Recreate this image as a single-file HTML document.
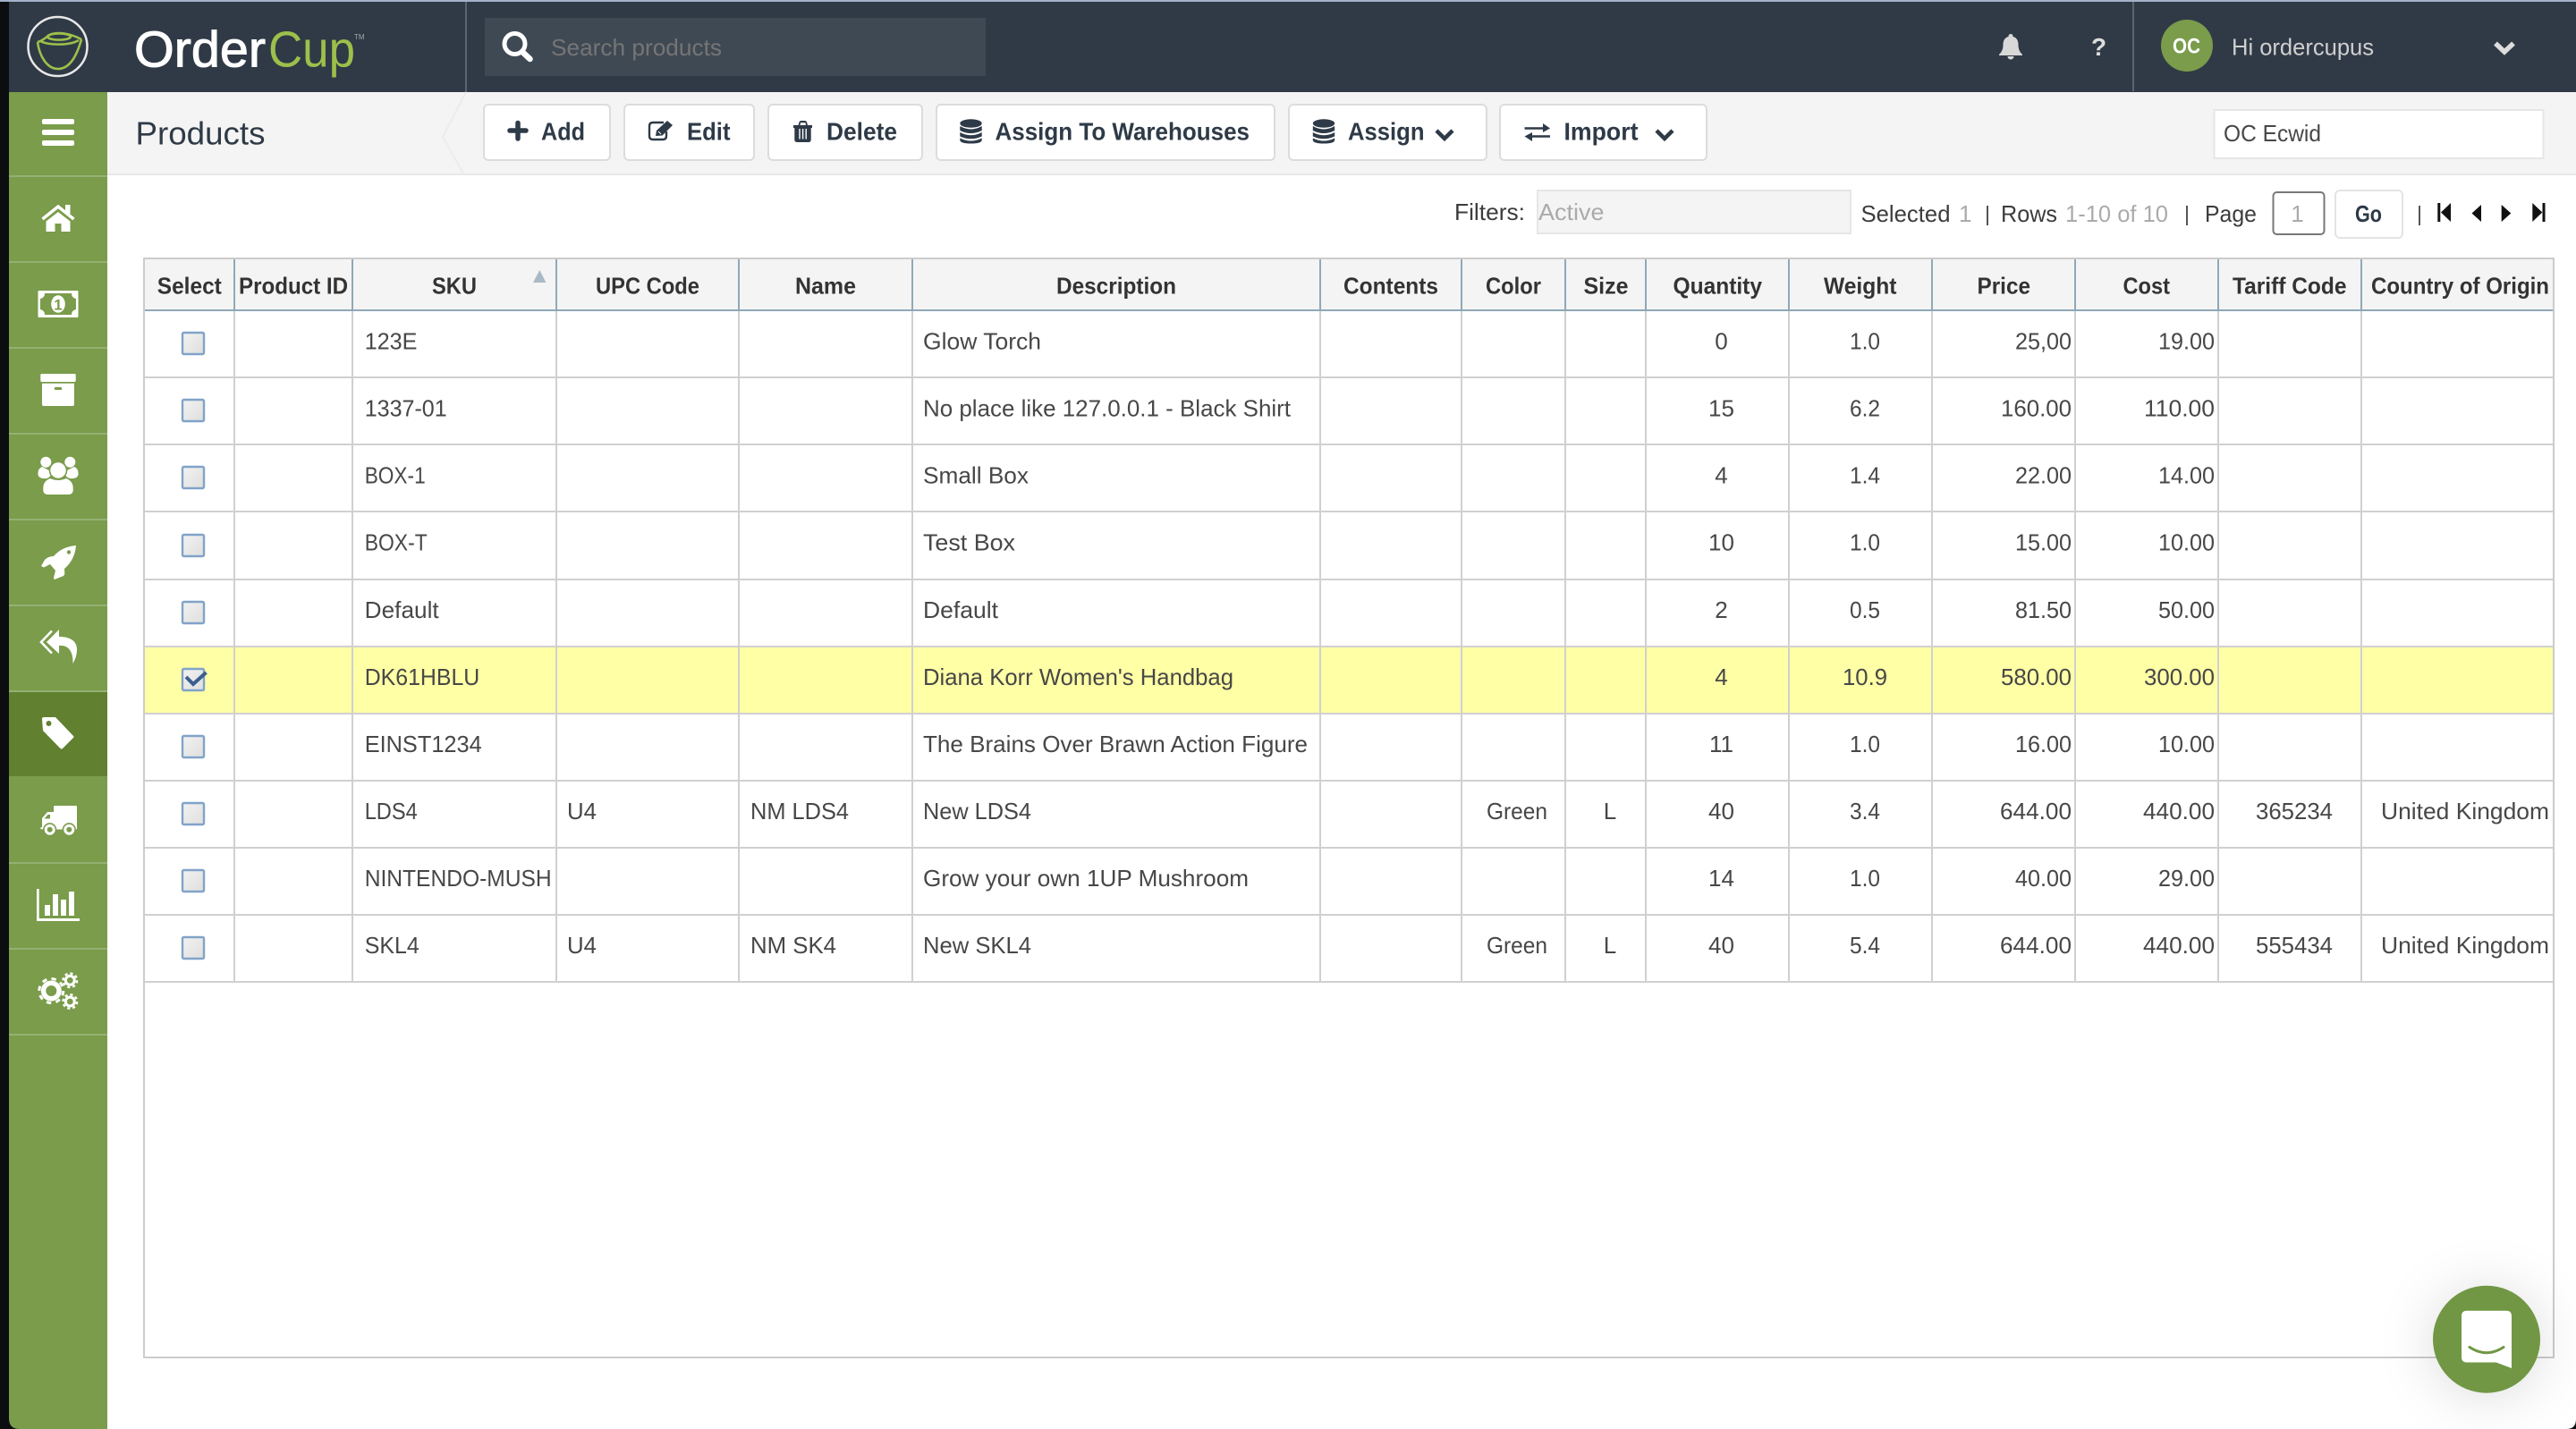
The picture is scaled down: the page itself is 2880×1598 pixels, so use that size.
<!DOCTYPE html>
<html><head><meta charset="utf-8"><title>Products</title>
<style>
html,body{margin:0;padding:0;background:#fff;width:2880px;height:1598px;overflow:hidden}
svg{display:block;font-family:"Liberation Sans",Arial,sans-serif}
.t{font-size:26px;fill:#474747}
.h{font-size:26px;font-weight:bold;fill:#333}
.btn{font-size:28px;font-weight:bold;fill:#2e3a47}
.g{fill:#aaa}
.d{fill:#444}
.m{text-anchor:middle}
.e{text-anchor:end}
</style></head><body>
<svg width="2880" height="1598" viewBox="0 0 2880 1598" xmlns="http://www.w3.org/2000/svg">
<rect width="2880" height="1598" fill="#fff"/>
<!-- left black strip -->
<rect width="10" height="1598" fill="#0b0d0e"/>
<!-- header -->
<rect x="10" y="0" width="2870" height="103" fill="#303a46"/>
<rect x="0" y="0" width="2880" height="2" fill="#a4b2c9"/>
<rect x="520" y="2" width="2" height="101" fill="#5a6570"/>
<rect x="2384" y="2" width="2" height="100" fill="#5a6570"/>
<!-- logo -->
<circle cx="64.5" cy="52" r="33" fill="none" stroke="#e8e8e8" stroke-width="2.5"/>
<g fill="none" stroke="#9cc04b" stroke-width="2.6">
<path d="M42 47 C44 62 52 77 65 77 C78 77 86 62 91 44"/>
<path d="M42 47 C50 45 52 40 58 38 C66 36 78 37 91 44"/>
<ellipse cx="66" cy="41" rx="13" ry="3.6"/>
<path d="M45 46 C55 51 78 51 88 45"/>
</g>
<text x="150" y="74.5" font-size="57" fill="#fff" stroke="#fff" stroke-width="1" textLength="147" lengthAdjust="spacingAndGlyphs">Order</text>
<text x="300" y="74.5" font-size="57" fill="#9cc04b" textLength="97" lengthAdjust="spacingAndGlyphs">Cup</text>
<text x="396" y="44" font-size="8" fill="#9aa">TM</text>
<!-- search -->
<rect x="542" y="20" width="560" height="65" fill="#3f4954"/>
<circle cx="575.5" cy="49" r="11.5" fill="none" stroke="#fff" stroke-width="5"/>
<path d="M584 58 L592.5 66" stroke="#fff" stroke-width="6.5" stroke-linecap="round"/>
<text x="616" y="62" class="t" style="fill:#757575" textLength="191" lengthAdjust="spacingAndGlyphs">Search products</text>
<!-- header right -->
<path fill="#d8d8d8" d="M2248 38 C2250 38 2250.5 39.5 2250.5 41 C2255 42 2256.5 46 2256.5 50 C2256.5 55 2258 58 2261 61 V62 H2235 V61 C2238 58 2239.5 55 2239.5 50 C2239.5 46 2241 42 2245.5 41 C2245.5 39.5 2246 38 2248 38Z M2244.5 63 H2251.5 A3.5 3.5 0 0 1 2244.5 63Z"/>
<text x="2346.5" y="62" font-size="28" font-weight="bold" fill="#ddd" class="m">?</text>
<circle cx="2445" cy="51" r="29" fill="#7a9c4b"/>
<text x="2444.5" y="59.3" font-size="24" font-weight="bold" fill="#fff" class="m" textLength="31" lengthAdjust="spacingAndGlyphs">OC</text>
<text x="2495" y="61.5" font-size="26" fill="#cfcfcf" textLength="159" lengthAdjust="spacingAndGlyphs">Hi ordercupus</text>
<path d="M2790 48.5 L2800 58 L2810 48.5" fill="none" stroke="#ddd" stroke-width="5.5"/>
<!-- toolbar -->
<rect x="120" y="103" width="2760" height="91" fill="#f4f4f4"/>
<rect x="120" y="194" width="2760" height="2" fill="#e8e8e8"/>
<polyline points="521,103 495,153 518,194" fill="none" stroke="#ececec" stroke-width="2"/>
<text x="151.5" y="161.5" font-size="36" fill="#2f3a46" textLength="145" lengthAdjust="spacingAndGlyphs">Products</text>
<g fill="#fff" stroke="#dcdcdc" stroke-width="2">
<rect x="541" y="117" width="141" height="62" rx="5"/>
<rect x="698" y="117" width="145" height="62" rx="5"/>
<rect x="859" y="117" width="172" height="62" rx="5"/>
<rect x="1047" y="117" width="378" height="62" rx="5"/>
<rect x="1441" y="117" width="221" height="62" rx="5"/>
<rect x="1677" y="117" width="231" height="62" rx="5"/>
</g>
<!-- plus -->
<path d="M579 137.5 V155 M570 146 H588" stroke="#2e3a47" stroke-width="5.5" stroke-linecap="round" fill="none"/>
<text x="605" y="156.5" class="btn" textLength="49" lengthAdjust="spacingAndGlyphs">Add</text>
<!-- edit -->
<path d="M742 137 H730 Q726 137 726 141 V152 Q726 156 730 156 H741 Q745 156 745 152 V147" fill="none" stroke="#2e3a47" stroke-width="2.4"/>
<path d="M733 152 L734 146 L746 135 L752 140 L740.5 151.5Z" fill="#2e3a47"/>
<path d="M736 147 L739 150" stroke="#fff" stroke-width="1"/>
<text x="768" y="156.5" class="btn" textLength="48.5" lengthAdjust="spacingAndGlyphs">Edit</text>
<!-- trash -->
<path fill="#2e3a47" d="M892.5 140 L893.5 136.5 Q894 135 896 135 H899.5 Q901.5 135 902 136.5 L903 140 H908 V143 H906.7 V156 Q906.7 159 904 159 H891 Q888.3 159 888.3 156 V143 H887 V140Z"/>
<path d="M895 137.3 H900.5 L901 140 H894.5Z" fill="#fff"/>
<path d="M894 144 V155.5 M897.6 144 V155.5 M901.2 144 V155.5" stroke="#fff" stroke-width="1.4"/>
<text x="924" y="156.5" class="btn" textLength="79" lengthAdjust="spacingAndGlyphs">Delete</text>
<!-- db -->
<g id="db" fill="#2e3a47">
<ellipse cx="1085.5" cy="138" rx="12.2" ry="4.8"/>
<path d="M1073.3 141 Q1085.5 148 1097.7 141 V146 Q1085.5 152 1073.3 146Z"/>
<path d="M1073.3 148 Q1085.5 154.5 1097.7 148 V152.5 Q1085.5 158 1073.3 152.5Z"/>
<path d="M1073.3 154.5 Q1085.5 160.5 1097.7 154.5 V156.5 Q1097.7 160.5 1085.5 160.5 Q1073.3 160.5 1073.3 156.5Z"/>
</g>
<text x="1112.5" y="156.5" class="btn" textLength="284.5" lengthAdjust="spacingAndGlyphs">Assign To Warehouses</text>
<g fill="#2e3a47" transform="translate(394.5 0)">
<ellipse cx="1085.5" cy="138" rx="12.2" ry="4.8"/>
<path d="M1073.3 141 Q1085.5 148 1097.7 141 V146 Q1085.5 152 1073.3 146Z"/>
<path d="M1073.3 148 Q1085.5 154.5 1097.7 148 V152.5 Q1085.5 158 1073.3 152.5Z"/>
<path d="M1073.3 154.5 Q1085.5 160.5 1097.7 154.5 V156.5 Q1097.7 160.5 1085.5 160.5 Q1073.3 160.5 1073.3 156.5Z"/>
</g>
<text x="1507" y="156.5" class="btn" textLength="85.5" lengthAdjust="spacingAndGlyphs">Assign</text>
<path d="M1606 146 L1615 155 L1624 146" fill="none" stroke="#2e3a47" stroke-width="4.5"/>
<!-- import -->
<path d="M1704.5 143.5 H1727 M1733 152.5 H1711" stroke="#2e3a47" stroke-width="2.6"/>
<path d="M1725 138 L1733 143.5 L1725 148Z M1713 148 L1704.5 152.5 L1713 158Z" fill="#2e3a47"/>
<text x="1748.5" y="156.5" class="btn" textLength="83" lengthAdjust="spacingAndGlyphs">Import</text>
<path d="M1852 146 L1861 155 L1870 146" fill="none" stroke="#2e3a47" stroke-width="4.5"/>
<!-- store input -->
<rect x="2475.5" y="123" width="368" height="54" fill="#fff" stroke="#e6e6e6" stroke-width="2"/>
<text x="2486" y="158" class="t" textLength="109" lengthAdjust="spacingAndGlyphs">OC Ecwid</text>
<!-- sidebar -->
<rect x="10" y="103" width="110" height="1495" fill="#7a9c4b"/>
<rect x="10" y="773" width="110" height="95" fill="#618030"/>
<g fill="#95b073">
<rect x="10" y="196" width="110" height="2"/><rect x="10" y="292" width="110" height="2"/><rect x="10" y="388" width="110" height="2"/><rect x="10" y="484" width="110" height="2"/><rect x="10" y="580" width="110" height="2"/><rect x="10" y="676" width="110" height="2"/><rect x="10" y="772" width="110" height="2"/><rect x="10" y="964" width="110" height="2"/><rect x="10" y="1060" width="110" height="2"/><rect x="10" y="1156" width="110" height="2"/>
</g>
<path d="M10 1586 Q10 1598 22 1598 H10Z" fill="#0b0d0e"/>
<g fill="#fff">
<!-- menu -->
<rect x="47" y="133" width="36" height="6" rx="2"/><rect x="47" y="145" width="36" height="6" rx="2"/><rect x="47" y="157" width="36" height="6" rx="2"/>
<!-- home -->
<path d="M47.5 245 L65 231 L82.5 245" fill="none" stroke="#fff" stroke-width="3.5"/>
<rect x="73" y="229" width="5.5" height="10"/>
<path d="M65 237 L78.5 247.5 V259 H68.5 V250 H61.5 V259 H51.5 V247.5 Z"/>
<!-- money -->
<rect x="42.5" y="325" width="45" height="30" rx="1"/>
<path fill="#7a9c4b" d="M50 328 H80 Q80 333 85 334 V346 Q80 347 80 352 H50 Q50 347 45 346 V334 Q50 333 50 328Z"/>
<ellipse cx="65" cy="340" rx="7.8" ry="9.8"/>
<text x="65" y="346.5" font-size="17" font-weight="bold" fill="#7a9c4b" class="m">1</text>
<!-- archive -->
<rect x="45.3" y="418" width="39.4" height="9" rx="1.5"/>
<path d="M47 428.7 H83 V452 Q83 454 81 454 H49 Q47 454 47 452Z"/>
<rect x="60.7" y="433" width="8.6" height="3" rx="1.5" fill="#7a9c4b"/>
<!-- people -->
<circle cx="51.3" cy="516.7" r="6"/><circle cx="78.3" cy="516.7" r="6"/>
<path d="M47 522 L57 527 Q58 533 52 535 Q44 536 42.5 531 Q42 524 47 522Z"/>
<path d="M83 522 L73 527 Q72 533 78 535 Q86 536 87.5 531 Q88 524 83 522Z"/>
<circle cx="65" cy="526" r="9.5" stroke="#7a9c4b" stroke-width="1.6"/>
<path d="M56 535 Q65 539 74 535 Q81.7 538 81.7 546 V548 Q81.7 553 76 553 H54 Q48.3 553 48.3 548 V546 Q48.3 538 56 535Z"/>
<!-- rocket -->
<path d="M85 610 C84 622 79 630 72 636 C72 640 73 642 71 644 L61 648 C60 648 60 646 60.5 644 L62 638 L56 631 L49 634.5 L46 633 L50 626 C53 623 57 622 60 622 C66 615 74 611 85 610Z"/>
<circle cx="77" cy="617.5" r="2.2" fill="#7a9c4b"/>
<!-- reply all -->
<path d="M58 705.5 L46 718 L58 730.5" fill="none" stroke="#fff" stroke-width="2.6"/>
<path d="M66 704 L52 718 L66 731 V722 C76 721 82 728 81.5 742 C85 736 86 731 86 726 C86 716 77 712 66 712Z"/>
<!-- tag -->
<path d="M47 804 Q47 802 49 802 H62 L82 823 Q83 824 82 825 L70 837 Q69 838 67.5 837 L48 817Z"/>
<circle cx="54.5" cy="809" r="3" fill="#618030"/>
<!-- truck -->
<rect x="60" y="901" width="26" height="26.5" rx="1"/>
<path d="M61 908 H53 L47 915 V925 H45.5 V927.3 H61 Z"/>
<path d="M56 911 H53.5 L49.5 915.5 H56Z" fill="#7a9c4b"/>
<circle cx="55.7" cy="927.7" r="7.6" fill="#7a9c4b"/><circle cx="55.7" cy="927.7" r="6"/><circle cx="55.7" cy="927.7" r="3" fill="#7a9c4b"/>
<circle cx="77.3" cy="927.7" r="7.6" fill="#7a9c4b"/><circle cx="77.3" cy="927.7" r="6"/><circle cx="77.3" cy="927.7" r="3" fill="#7a9c4b"/>
<!-- chart -->
<rect x="41" y="994" width="2.7" height="36"/><rect x="41" y="1027" width="48" height="3"/>
<rect x="50" y="1012" width="6" height="12"/><rect x="59" y="1000" width="6" height="24"/><rect x="68" y="1006" width="6" height="18"/><rect x="77" y="997" width="6" height="27"/>
<!-- gears -->
<circle cx="57.3" cy="1108" r="11.5"/>
<circle cx="57.3" cy="1108" r="13.5" fill="none" stroke="#fff" stroke-width="3" stroke-dasharray="5.3 5.3"/>
<circle cx="57.3" cy="1108" r="6" fill="#7a9c4b"/>
<circle cx="78.3" cy="1096.3" r="6.5"/>
<circle cx="78.3" cy="1096.3" r="7.8" fill="none" stroke="#fff" stroke-width="2.4" stroke-dasharray="3.1 3"/>
<circle cx="78.3" cy="1096.3" r="3.4" fill="#7a9c4b"/>
<circle cx="78.3" cy="1120" r="6.5"/>
<circle cx="78.3" cy="1120" r="7.8" fill="none" stroke="#fff" stroke-width="2.4" stroke-dasharray="3.1 3"/>
<circle cx="78.3" cy="1120" r="3.4" fill="#7a9c4b"/>
</g>
<!-- filter bar -->
<text x="1626" y="246" class="t" style="fill:#3c3c3c" textLength="79" lengthAdjust="spacingAndGlyphs">Filters:</text>
<rect x="1719" y="213" width="350" height="48" fill="#f4f4f4" stroke="#e6e6e6" stroke-width="2"/>
<text x="1720" y="246" class="t g" textLength="73.5" lengthAdjust="spacingAndGlyphs">Active</text>
<text x="2080.5" y="248" class="t" style="fill:#3c3c3c" textLength="100" lengthAdjust="spacingAndGlyphs">Selected</text>
<text x="2190" y="248" class="t g">1</text>
<rect x="2221" y="230" width="2" height="22" fill="#555"/>
<text x="2237" y="248" class="t" style="fill:#3c3c3c" textLength="63" lengthAdjust="spacingAndGlyphs">Rows</text>
<text x="2309" y="248" class="t g" textLength="115" lengthAdjust="spacingAndGlyphs">1-10 of 10</text>
<rect x="2444" y="230" width="2" height="22" fill="#555"/>
<text x="2465" y="248" class="t" style="fill:#3c3c3c" textLength="58" lengthAdjust="spacingAndGlyphs">Page</text>
<rect x="2541.5" y="215" width="57" height="47" rx="4" fill="#fff" stroke="#777" stroke-width="2"/>
<text x="2568.5" y="248" class="t m g">1</text>
<rect x="2611" y="213" width="75" height="53" rx="5" fill="#fff" stroke="#e4e4e4" stroke-width="2"/>
<text x="2648" y="248" font-size="26" font-weight="bold" fill="#2e3a47" class="m" textLength="30" lengthAdjust="spacingAndGlyphs">Go</text>
<rect x="2704" y="230" width="2" height="22" fill="#555"/>
<g fill="#111">
<rect x="2725.3" y="227" width="3" height="21"/><path d="M2740 227 L2729 237.5 L2740 248Z"/>
<path d="M2774 229 L2763.5 238.5 L2774 248Z"/>
<path d="M2796.7 229 L2807.3 238.5 L2796.7 248Z"/>
<rect x="2842.5" y="227" width="3" height="21"/><path d="M2831.3 227 L2842.3 237.5 L2831.3 248Z"/>
</g>
<!-- table -->
<rect x="161" y="289" width="2694" height="1229" fill="#fff" stroke="#ccc" stroke-width="2"/>
<rect x="162" y="290" width="2692" height="56" fill="#f4f4f4"/>
<rect x="162" y="723.5" width="2692" height="73.5" fill="#ffffa6"/>
<!-- horizontal lines -->
<g fill="#d0d0d0">
<rect x="162" y="421" width="2692" height="2"/><rect x="162" y="496" width="2692" height="2"/><rect x="162" y="571" width="2692" height="2"/><rect x="162" y="647" width="2692" height="2"/><rect x="162" y="722" width="2692" height="2"/><rect x="162" y="797" width="2692" height="2"/><rect x="162" y="872" width="2692" height="2"/><rect x="162" y="947" width="2692" height="2"/><rect x="162" y="1022" width="2692" height="2"/><rect x="162" y="1097" width="2692" height="2"/>
</g>
<!-- vertical body lines -->
<g fill="#d0d0d0">
<rect x="261" y="348" width="2" height="751"/><rect x="393" y="348" width="2" height="751"/><rect x="621" y="348" width="2" height="751"/><rect x="825" y="348" width="2" height="751"/><rect x="1019" y="348" width="2" height="751"/><rect x="1475" y="348" width="2" height="751"/><rect x="1633" y="348" width="2" height="751"/><rect x="1749" y="348" width="2" height="751"/><rect x="1839" y="348" width="2" height="751"/><rect x="1999" y="348" width="2" height="751"/><rect x="2159" y="348" width="2" height="751"/><rect x="2319" y="348" width="2" height="751"/><rect x="2479" y="348" width="2" height="751"/><rect x="2639" y="348" width="2" height="751"/>
</g>
<!-- header lines -->
<g fill="#8fa8b8">
<rect x="162" y="346" width="2692" height="2"/>
<rect x="261" y="290" width="2" height="56"/><rect x="393" y="290" width="2" height="56"/><rect x="621" y="290" width="2" height="56"/><rect x="825" y="290" width="2" height="56"/><rect x="1019" y="290" width="2" height="56"/><rect x="1475" y="290" width="2" height="56"/><rect x="1633" y="290" width="2" height="56"/><rect x="1749" y="290" width="2" height="56"/><rect x="1839" y="290" width="2" height="56"/><rect x="1999" y="290" width="2" height="56"/><rect x="2159" y="290" width="2" height="56"/><rect x="2319" y="290" width="2" height="56"/><rect x="2479" y="290" width="2" height="56"/><rect x="2639" y="290" width="2" height="56"/>
</g>
<!-- header text -->
<g class="h">
<text class="h" x="175.8" y="328.5" textLength="72" lengthAdjust="spacingAndGlyphs">Select</text>
<text class="h" x="267" y="328.5" textLength="122" lengthAdjust="spacingAndGlyphs">Product ID</text>
<text class="h" x="483" y="328.5" textLength="50" lengthAdjust="spacingAndGlyphs">SKU</text>
<text class="h" x="666" y="328.5" textLength="116" lengthAdjust="spacingAndGlyphs">UPC Code</text>
<text class="h" x="889" y="328.5" textLength="68" lengthAdjust="spacingAndGlyphs">Name</text>
<text class="h" x="1181" y="328.5" textLength="134" lengthAdjust="spacingAndGlyphs">Description</text>
<text class="h" x="1502" y="328.5" textLength="106" lengthAdjust="spacingAndGlyphs">Contents</text>
<text class="h" x="1661" y="328.5" textLength="62" lengthAdjust="spacingAndGlyphs">Color</text>
<text class="h" x="1770.5" y="328.5" textLength="50" lengthAdjust="spacingAndGlyphs">Size</text>
<text class="h" x="1870.5" y="328.5" textLength="99.5" lengthAdjust="spacingAndGlyphs">Quantity</text>
<text class="h" x="2039" y="328.5" textLength="81.5" lengthAdjust="spacingAndGlyphs">Weight</text>
<text class="h" x="2210.5" y="328.5" textLength="59.5" lengthAdjust="spacingAndGlyphs">Price</text>
<text class="h" x="2373.5" y="328.5" textLength="52.5" lengthAdjust="spacingAndGlyphs">Cost</text>
<text class="h" x="2496" y="328.5" textLength="127.5" lengthAdjust="spacingAndGlyphs">Tariff Code</text>
<text class="h" x="2651" y="328.5" textLength="199" lengthAdjust="spacingAndGlyphs">Country of Origin</text>
</g>
<path d="M603.3 302 L610.5 316 H596Z" fill="#aab8c8"/>
<!-- checkboxes -->
<defs><linearGradient id="cb" x1="0" y1="0" x2="1" y2="1"><stop offset="0" stop-color="#f2f2f2"/><stop offset="1" stop-color="#dedfdd"/></linearGradient></defs>
<g fill="url(#cb)" stroke="#81a3c9" stroke-width="2.4">
<rect x="204" y="372" width="24" height="24" rx="1.5"/>
<rect x="204" y="447" width="24" height="24" rx="1.5"/>
<rect x="204" y="522" width="24" height="24" rx="1.5"/>
<rect x="204" y="598" width="24" height="24" rx="1.5"/>
<rect x="204" y="673" width="24" height="24" rx="1.5"/>
<rect x="204" y="748" width="24" height="24" rx="1.5"/>
<rect x="204" y="823" width="24" height="24" rx="1.5"/>
<rect x="204" y="898" width="24" height="24" rx="1.5"/>
<rect x="204" y="973" width="24" height="24" rx="1.5"/>
<rect x="204" y="1048" width="24" height="24" rx="1.5"/>
</g>
<path d="M208 757 L216 765 L230.5 752" fill="none" stroke="#3a5f8f" stroke-width="4"/>
<!-- row 1 -->
<text class="t" x="407.7" y="390.5" textLength="58.8" lengthAdjust="spacingAndGlyphs">123E</text>
<text class="t" x="1032" y="390.5" textLength="132" lengthAdjust="spacingAndGlyphs">Glow Torch</text>
<text class="t m" x="1924.5" y="390.5">0</text>
<text class="t m" x="2085" y="390.5" textLength="34" lengthAdjust="spacingAndGlyphs">1.0</text>
<text class="t e" x="2316" y="390.5" textLength="63" lengthAdjust="spacingAndGlyphs">25,00</text>
<text class="t e" x="2476" y="390.5" textLength="63" lengthAdjust="spacingAndGlyphs">19.00</text>
<!-- row 2 -->
<text class="t" x="407.7" y="465.5" textLength="92" lengthAdjust="spacingAndGlyphs">1337-01</text>
<text class="t" x="1032" y="465.5" textLength="411" lengthAdjust="spacingAndGlyphs">No place like 127.0.0.1 - Black Shirt</text>
<text class="t m" x="1924.5" y="465.5">15</text>
<text class="t m" x="2085" y="465.5" textLength="34" lengthAdjust="spacingAndGlyphs">6.2</text>
<text class="t e" x="2316" y="465.5" textLength="79" lengthAdjust="spacingAndGlyphs">160.00</text>
<text class="t e" x="2476" y="465.5" textLength="79" lengthAdjust="spacingAndGlyphs">110.00</text>
<!-- row 3 -->
<text class="t" x="407.7" y="540.5" textLength="68" lengthAdjust="spacingAndGlyphs">BOX-1</text>
<text class="t" x="1032" y="540.5" textLength="118" lengthAdjust="spacingAndGlyphs">Small Box</text>
<text class="t m" x="1924.5" y="540.5">4</text>
<text class="t m" x="2085" y="540.5" textLength="34" lengthAdjust="spacingAndGlyphs">1.4</text>
<text class="t e" x="2316" y="540.5" textLength="63" lengthAdjust="spacingAndGlyphs">22.00</text>
<text class="t e" x="2476" y="540.5" textLength="63" lengthAdjust="spacingAndGlyphs">14.00</text>
<!-- row 4 -->
<text class="t" x="407.7" y="615.7" textLength="70" lengthAdjust="spacingAndGlyphs">BOX-T</text>
<text class="t" x="1032" y="615.7" textLength="103" lengthAdjust="spacingAndGlyphs">Test Box</text>
<text class="t m" x="1924.5" y="615.7">10</text>
<text class="t m" x="2085" y="615.7" textLength="34" lengthAdjust="spacingAndGlyphs">1.0</text>
<text class="t e" x="2316" y="615.7" textLength="63" lengthAdjust="spacingAndGlyphs">15.00</text>
<text class="t e" x="2476" y="615.7" textLength="63" lengthAdjust="spacingAndGlyphs">10.00</text>
<!-- row 5 -->
<text class="t" x="407.7" y="690.8" textLength="83" lengthAdjust="spacingAndGlyphs">Default</text>
<text class="t" x="1032" y="690.8" textLength="84" lengthAdjust="spacingAndGlyphs">Default</text>
<text class="t m" x="1924.5" y="690.8">2</text>
<text class="t m" x="2085" y="690.8" textLength="34" lengthAdjust="spacingAndGlyphs">0.5</text>
<text class="t e" x="2316" y="690.8" textLength="63" lengthAdjust="spacingAndGlyphs">81.50</text>
<text class="t e" x="2476" y="690.8" textLength="63" lengthAdjust="spacingAndGlyphs">50.00</text>
<!-- row 6 -->
<text class="t" x="407.7" y="765.9" textLength="128.6" lengthAdjust="spacingAndGlyphs">DK61HBLU</text>
<text class="t" x="1032" y="765.9" textLength="347" lengthAdjust="spacingAndGlyphs">Diana Korr Women's Handbag</text>
<text class="t m" x="1924.5" y="765.9">4</text>
<text class="t m" x="2085" y="765.9" textLength="50" lengthAdjust="spacingAndGlyphs">10.9</text>
<text class="t e" x="2316" y="765.9" textLength="79" lengthAdjust="spacingAndGlyphs">580.00</text>
<text class="t e" x="2476" y="765.9" textLength="79" lengthAdjust="spacingAndGlyphs">300.00</text>
<!-- row 7 -->
<text class="t" x="407.7" y="841" textLength="131" lengthAdjust="spacingAndGlyphs">EINST1234</text>
<text class="t" x="1032" y="841" textLength="430" lengthAdjust="spacingAndGlyphs">The Brains Over Brawn Action Figure</text>
<text class="t m" x="1924.5" y="841">11</text>
<text class="t m" x="2085" y="841" textLength="34" lengthAdjust="spacingAndGlyphs">1.0</text>
<text class="t e" x="2316" y="841" textLength="63" lengthAdjust="spacingAndGlyphs">16.00</text>
<text class="t e" x="2476" y="841" textLength="63" lengthAdjust="spacingAndGlyphs">10.00</text>
<!-- row 8 -->
<text class="t" x="407.7" y="916" textLength="59" lengthAdjust="spacingAndGlyphs">LDS4</text>
<text class="t" x="634" y="916" textLength="33" lengthAdjust="spacingAndGlyphs">U4</text>
<text class="t" x="839" y="916" textLength="110" lengthAdjust="spacingAndGlyphs">NM LDS4</text>
<text class="t" x="1032" y="916" textLength="121" lengthAdjust="spacingAndGlyphs">New LDS4</text>
<text class="t" x="1662" y="916" textLength="68" lengthAdjust="spacingAndGlyphs">Green</text>
<text class="t m" x="1800" y="916">L</text>
<text class="t m" x="1924.5" y="916">40</text>
<text class="t m" x="2085" y="916" textLength="34" lengthAdjust="spacingAndGlyphs">3.4</text>
<text class="t e" x="2316" y="916" textLength="80" lengthAdjust="spacingAndGlyphs">644.00</text>
<text class="t e" x="2476" y="916" textLength="80" lengthAdjust="spacingAndGlyphs">440.00</text>
<text class="t" x="2522" y="916" textLength="86" lengthAdjust="spacingAndGlyphs">365234</text>
<text class="t" x="2662" y="916" textLength="188" lengthAdjust="spacingAndGlyphs">United Kingdom</text>
<!-- row 9 -->
<text class="t" x="407.7" y="991.1" textLength="209" lengthAdjust="spacingAndGlyphs">NINTENDO-MUSH</text>
<text class="t" x="1032" y="991.1" textLength="364" lengthAdjust="spacingAndGlyphs">Grow your own 1UP Mushroom</text>
<text class="t m" x="1924.5" y="991.1">14</text>
<text class="t m" x="2085" y="991.1" textLength="34" lengthAdjust="spacingAndGlyphs">1.0</text>
<text class="t e" x="2316" y="991.1" textLength="63" lengthAdjust="spacingAndGlyphs">40.00</text>
<text class="t e" x="2476" y="991.1" textLength="63" lengthAdjust="spacingAndGlyphs">29.00</text>
<!-- row 10 -->
<text class="t" x="407.7" y="1066.2" textLength="61" lengthAdjust="spacingAndGlyphs">SKL4</text>
<text class="t" x="634" y="1066.2" textLength="33" lengthAdjust="spacingAndGlyphs">U4</text>
<text class="t" x="839" y="1066.2" textLength="96" lengthAdjust="spacingAndGlyphs">NM SK4</text>
<text class="t" x="1032" y="1066.2" textLength="121" lengthAdjust="spacingAndGlyphs">New SKL4</text>
<text class="t" x="1662" y="1066.2" textLength="68" lengthAdjust="spacingAndGlyphs">Green</text>
<text class="t m" x="1800" y="1066.2">L</text>
<text class="t m" x="1924.5" y="1066.2">40</text>
<text class="t m" x="2085" y="1066.2" textLength="34" lengthAdjust="spacingAndGlyphs">5.4</text>
<text class="t e" x="2316" y="1066.2" textLength="80" lengthAdjust="spacingAndGlyphs">644.00</text>
<text class="t e" x="2476" y="1066.2" textLength="80" lengthAdjust="spacingAndGlyphs">440.00</text>
<text class="t" x="2522" y="1066.2" textLength="86" lengthAdjust="spacingAndGlyphs">555434</text>
<text class="t" x="2662" y="1066.2" textLength="188" lengthAdjust="spacingAndGlyphs">United Kingdom</text>
<!-- chat -->
<circle cx="2780" cy="1497.7" r="60" fill="#719744" style="filter:drop-shadow(0 4px 30px rgba(0,0,0,.14))"/>
<path d="M2758 1465.7 H2802 Q2808 1465.7 2808 1471.7 V1530 L2790.7 1523.5 H2758 Q2752 1523.5 2752 1517.5 V1471.7 Q2752 1465.7 2758 1465.7Z" fill="#fff"/>
<path d="M2761 1506.5 Q2780 1519 2799 1506.5" fill="none" stroke="#719744" stroke-width="3" stroke-linecap="round"/>
<!-- window corner -->
<path d="M2880 1587 Q2880 1598 2869 1598 H2880Z" fill="#111"/>
</svg>
</body></html>
